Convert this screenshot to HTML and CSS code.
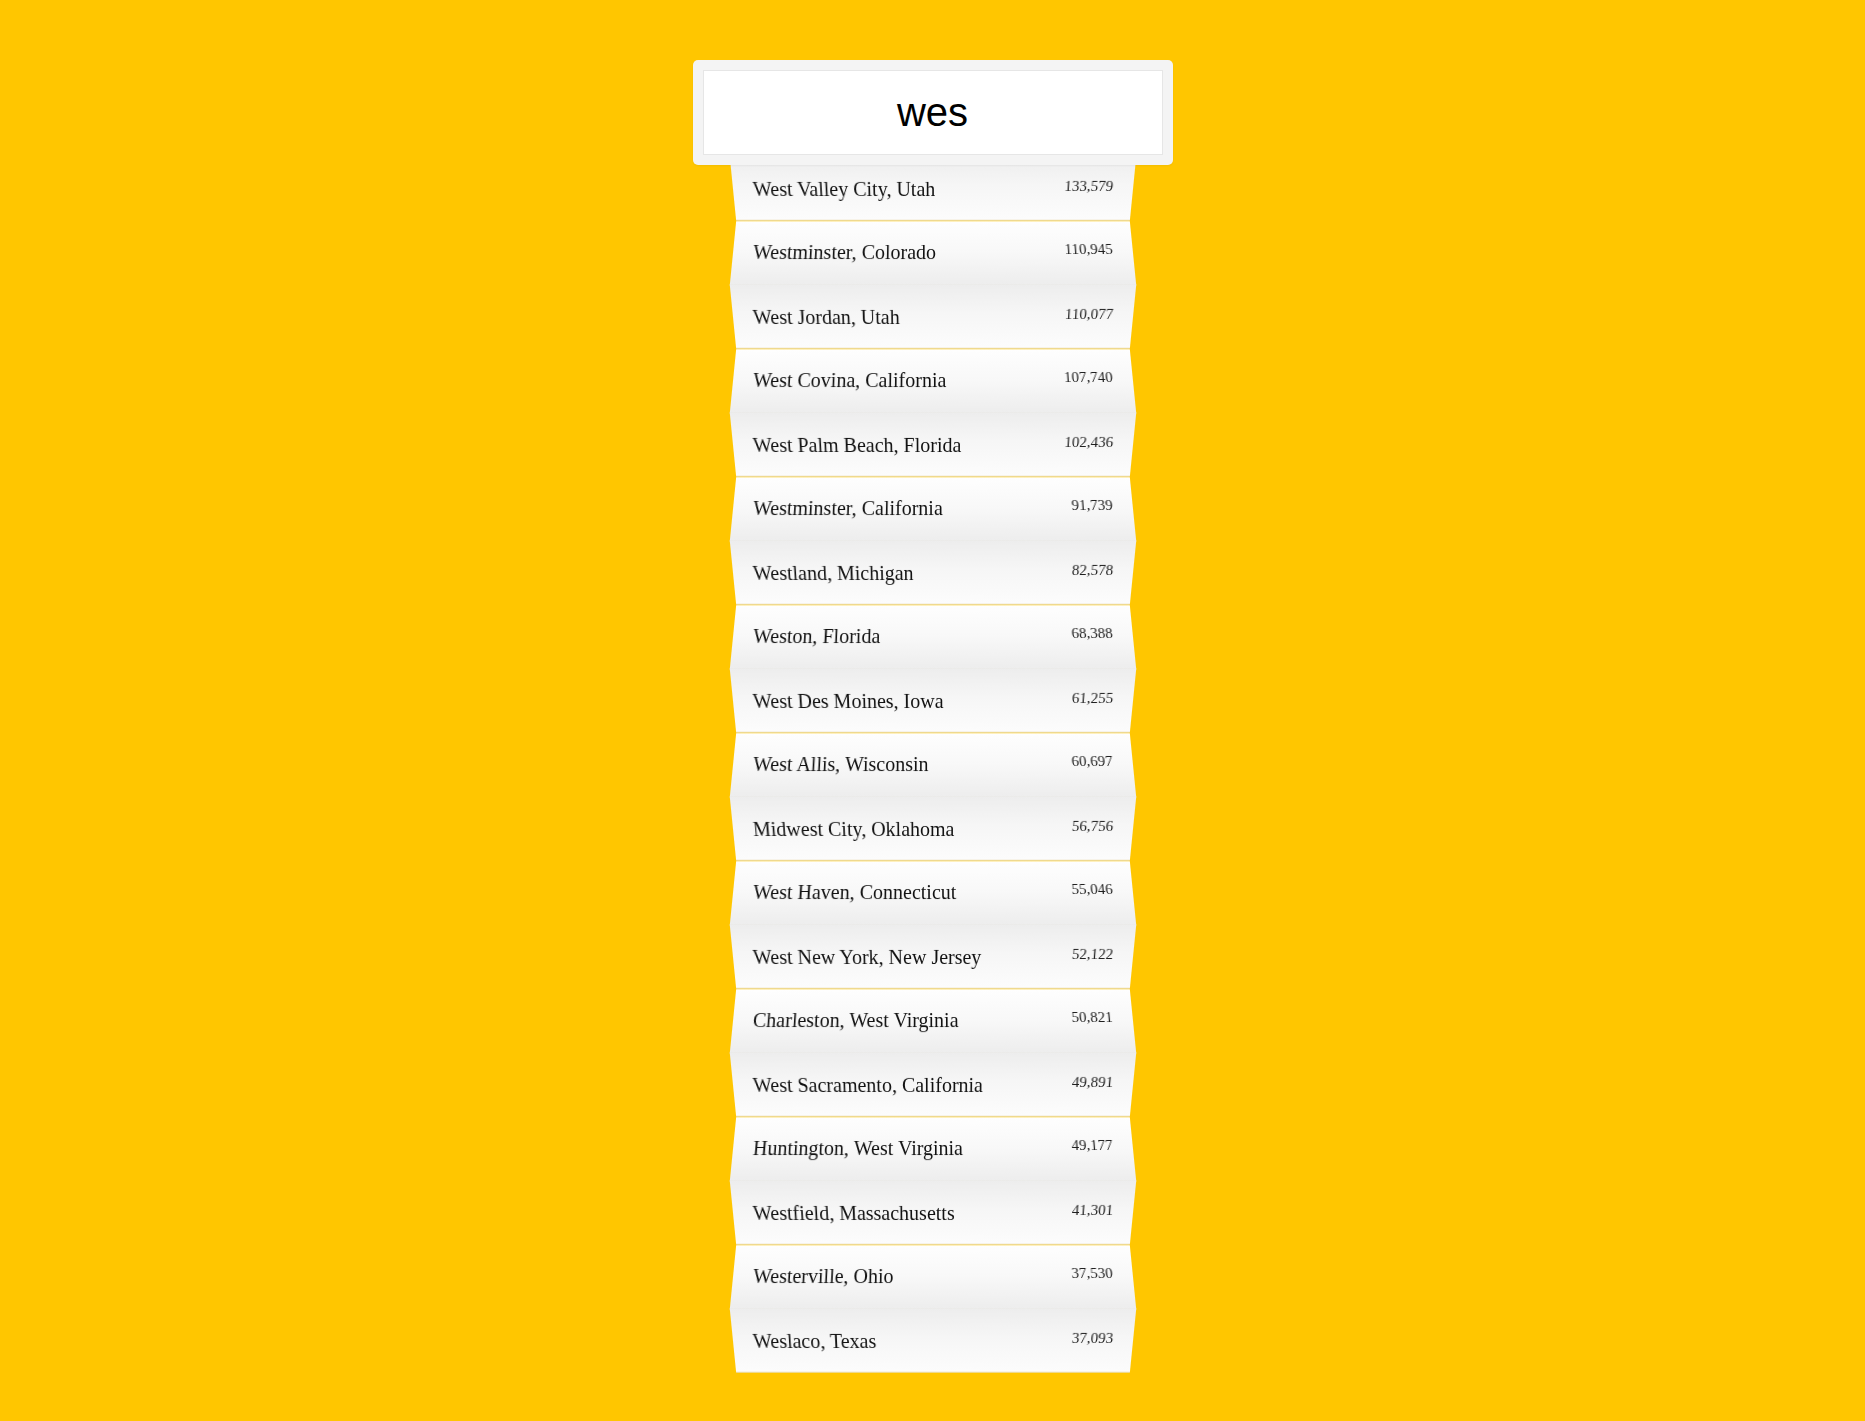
FILE: index.html
```html
<!DOCTYPE html>
<html>
<head>
<meta charset="utf-8">
<link rel="stylesheet" href="styles.css">
<title>wes</title>
</head>
<body>
<div class="wrap">
  <div class="search">
    <div class="field">wes</div>
  </div>
  <ul class="list">
    <li><span class="name">West Valley City, Utah</span><span class="pop">133,579</span></li>
    <li><span class="name">Westminster, Colorado</span><span class="pop">110,945</span></li>
    <li><span class="name">West Jordan, Utah</span><span class="pop">110,077</span></li>
    <li><span class="name">West Covina, California</span><span class="pop">107,740</span></li>
    <li><span class="name">West Palm Beach, Florida</span><span class="pop">102,436</span></li>
    <li><span class="name">Westminster, California</span><span class="pop">91,739</span></li>
    <li><span class="name">Westland, Michigan</span><span class="pop">82,578</span></li>
    <li><span class="name">Weston, Florida</span><span class="pop">68,388</span></li>
    <li><span class="name">West Des Moines, Iowa</span><span class="pop">61,255</span></li>
    <li><span class="name">West Allis, Wisconsin</span><span class="pop">60,697</span></li>
    <li><span class="name">Midwest City, Oklahoma</span><span class="pop">56,756</span></li>
    <li><span class="name">West Haven, Connecticut</span><span class="pop">55,046</span></li>
    <li><span class="name">West New York, New Jersey</span><span class="pop">52,122</span></li>
    <li><span class="name">Charleston, West Virginia</span><span class="pop">50,821</span></li>
    <li><span class="name">West Sacramento, California</span><span class="pop">49,891</span></li>
    <li><span class="name">Huntington, West Virginia</span><span class="pop">49,177</span></li>
    <li><span class="name">Westfield, Massachusetts</span><span class="pop">41,301</span></li>
    <li><span class="name">Westerville, Ohio</span><span class="pop">37,530</span></li>
    <li><span class="name">Weslaco, Texas</span><span class="pop">37,093</span></li>
  </ul>
</div>
</body>
</html>
```

FILE: styles.css
```css
html, body {
  margin: 0;
  padding: 0;
  background: #ffc600;
}

body {
  font-family: "Liberation Serif", "Times New Roman", serif;
  color: #111;
}

.wrap {
  width: 480px;
  margin: 60px auto 0;
  display: flex;
  flex-direction: column;
  align-items: center;
}

.search {
  position: relative;
  z-index: 5;
  width: 480px;
  box-sizing: border-box;
  padding: 10px;
  background: #f4f4f4;
  border-radius: 5px;
  box-shadow: 0 1px 2px rgba(0, 0, 0, 0.05);
}

.field {
  height: 85px;
  box-sizing: border-box;
  background: #fff;
  border: 1px solid #e6e6e6;
  display: flex;
  align-items: center;
  justify-content: center;
  font-family: "Liberation Sans", Arial, sans-serif;
  font-size: 40px;
  color: #000;
}

.list {
  list-style: none;
  margin: -8px 0 0;
  padding: 0;
  width: 400px;
}

.list li {
  height: 64px;
  box-sizing: border-box;
  padding: 20.3px 20px 0;
  display: flex;
  justify-content: space-between;
  align-items: flex-start;
  transform-origin: 50% 50%;
}

.list li:nth-child(odd) {
  background: linear-gradient(to bottom, #ededed 0%, #f6f6f6 45%, #fcfcfc 100%);
  border-bottom: 1px solid #eadfbd;
  transform: perspective(600px) rotateX(-16.7deg) scaleY(1.05);
}

.list li:nth-child(even) {
  padding-top: 19.1px;
  background: linear-gradient(to bottom, #fefefe 0%, #f8f8f8 50%, #ededed 100%);
  border-bottom: 1px solid #dcd6c4;
  transform: perspective(600px) rotateX(16.7deg) scaleY(1.05);
}

.name {
  display: inline-block;
  font-size: 20px;
  line-height: 24px;
  color: #111;
  transform: scaleY(1.06);
  transform-origin: 0 100%;
}

.pop {
  display: inline-block;
  font-size: 15px;
  line-height: 18px;
  color: #1e1e1e;
  transform: scaleY(1.04);
  transform-origin: 100% 100%;
}
```
